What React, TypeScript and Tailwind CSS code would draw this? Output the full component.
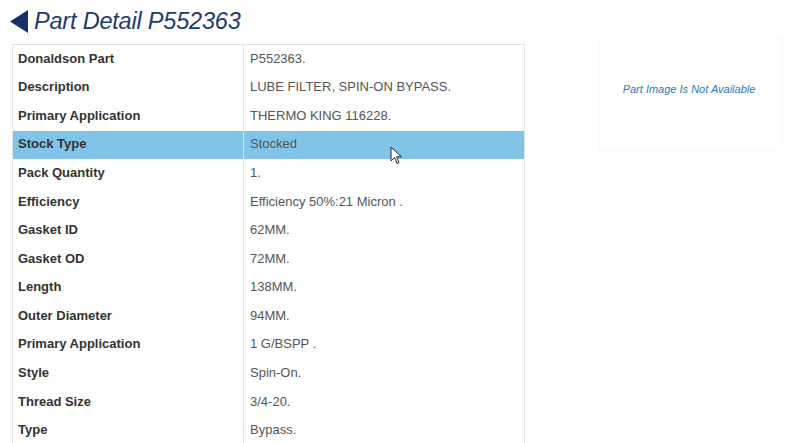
import React from 'react';

const rows = [
  { label: 'Donaldson Part', value: 'P552363.' },
  { label: 'Description', value: 'LUBE FILTER, SPIN-ON BYPASS.' },
  { label: 'Primary Application', value: 'THERMO KING 116228.' },
  { label: 'Stock Type', value: 'Stocked', active: true },
  { label: 'Pack Quantity', value: '1.' },
  { label: 'Efficiency', value: 'Efficiency 50%:21 Micron .' },
  { label: 'Gasket ID', value: '62MM.' },
  { label: 'Gasket OD', value: '72MM.' },
  { label: 'Length', value: '138MM.' },
  { label: 'Outer Diameter', value: '94MM.' },
  { label: 'Primary Application', value: '1 G/BSPP .' },
  { label: 'Style', value: 'Spin-On.' },
  { label: 'Thread Size', value: '3/4-20.' },
  { label: 'Type', value: 'Bypass.' },
];

export default function App() {
  return (
    <div className="relative w-[800px] h-[443px] overflow-hidden bg-white font-['Liberation_Sans',Arial,sans-serif]">
      {/* Header */}
      <div className="flex items-center h-[44px] pl-[10px] pb-[1px]">
        <svg width="19" height="23" viewBox="0 0 19 23" className="mr-[5px]">
          <polygon points="0,11.5 18,0 18,23" fill="#16306e" />
        </svg>
        <h1 className="text-[23.5px] italic leading-none text-[#1c3b70] tracking-[-0.2px]">Part Detail P552363</h1>
      </div>

      <div className="flex items-start pl-[12px]">
        {/* Details table */}
        <div className="w-[513px] border border-[#e4e4e4]">
          {rows.map((row, idx) => (
            <div
              key={idx}
              className={`flex h-[28.6px] items-center text-[13px] ${row.active ? 'bg-[#80c4e8]' : ''}`}
            >
              <div className="w-[231px] h-full flex items-center pl-[5px] pb-[2px] font-bold text-[#333333] border-r border-[#e4e4e4]">
                {row.label}
              </div>
              <div className="flex-1 pl-[6px] pb-[2px] text-[#555555]">{row.value}</div>
            </div>
          ))}
        </div>

        {/* Image placeholder */}
        <div className="ml-[74px] mt-[-6px] w-[184px] h-[114px] border border-[#fafafa] flex items-start justify-center pt-[42px] pr-[4px]">
          <span className="text-[11px] italic text-[#2b7bb9]">Part Image Is Not Available</span>
        </div>
      </div>

      {/* Mouse cursor */}
      <svg width="13" height="20" viewBox="0 0 13 20" className="absolute left-[390px] top-[146px]">
        <path d="M1 1 L1 15 L4.5 11.5 L7 17.5 L9 16.6 L6.6 10.8 L11.5 10.8 Z" fill="#ffffff" stroke="#222222" strokeWidth="1" strokeLinejoin="round" />
      </svg>
    </div>
  );
}
